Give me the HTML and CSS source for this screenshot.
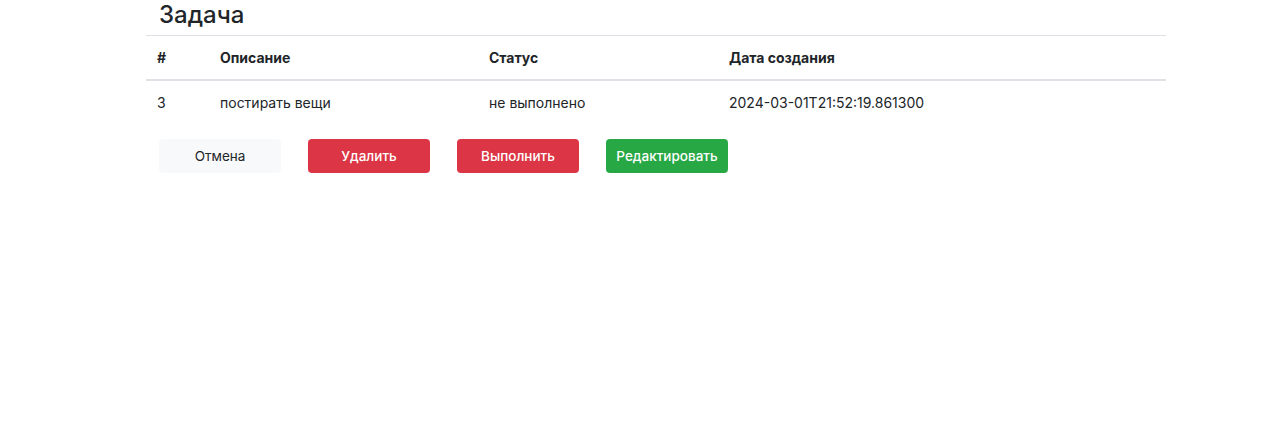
FILE: index.html
```html
<!DOCTYPE html>
<html lang="ru">
<head>
<meta charset="utf-8">
<link rel="stylesheet" href="styles.css">
</head>
<body>
<div class="page">
  <h2 class="title">Задача</h2>
  <table class="task-table">
    <colgroup>
      <col class="c-id"><col class="c-desc"><col class="c-status"><col class="c-date">
    </colgroup>
    <thead>
      <tr><th>#</th><th>Описание</th><th>Статус</th><th>Дата создания</th></tr>
    </thead>
    <tbody>
      <tr><td>3</td><td>постирать вещи</td><td>не выполнено</td><td>2024-03-01T21:52:19.861300</td></tr>
    </tbody>
  </table>
  <div class="actions">
    <button class="btn btn-light">Отмена</button>
    <button class="btn btn-red">Удалить</button>
    <button class="btn btn-red">Выполнить</button>
    <button class="btn btn-green">Редактировать</button>
  </div>
</div>
</body>
</html>
```

FILE: styles.css
```css
* { box-sizing: border-box; }
body {
  margin: 0;
  background: #fff;
  font-family: Inter, "Liberation Sans", sans-serif;
  color: #212529;
}
.page {
  width: 1020px;
  margin-left: 146px;
}
.title {
  margin: 0;
  padding-left: 13px;
  font-size: 24px;
  font-weight: 500;
  line-height: 30px;
  height: 35px;
}
.task-table {
  width: 100%;
  border-collapse: collapse;
  font-size: 14px;
}
.c-id { width: 63px; }
.c-desc { width: 269px; }
.c-status { width: 240px; }
.task-table th, .task-table td {
  text-align: left;
  padding: 0 11px;
  height: 44px;
  border-top: 1px solid #dee2e6;
}
.task-table th {
  font-weight: 700;
  border-bottom: 2px solid #dee2e6;
}
.task-table td { border-top: none; }
.actions {
  display: flex;
  gap: 27px;
  padding-left: 13px;
  margin-top: 15px;
}
.btn {
  width: 122px;
  height: 34px;
  border: none;
  border-radius: 4px;
  font-family: Inter, "Liberation Sans", sans-serif;
  font-size: 13.5px;
  font-weight: 500;
  color: #fff;
  padding: 0;
}
.btn-light { background: #f8f9fa; color: #212529; font-weight: 400; }
.btn-red { background: #dc3545; }
.btn-green { background: #28a745; }
```
